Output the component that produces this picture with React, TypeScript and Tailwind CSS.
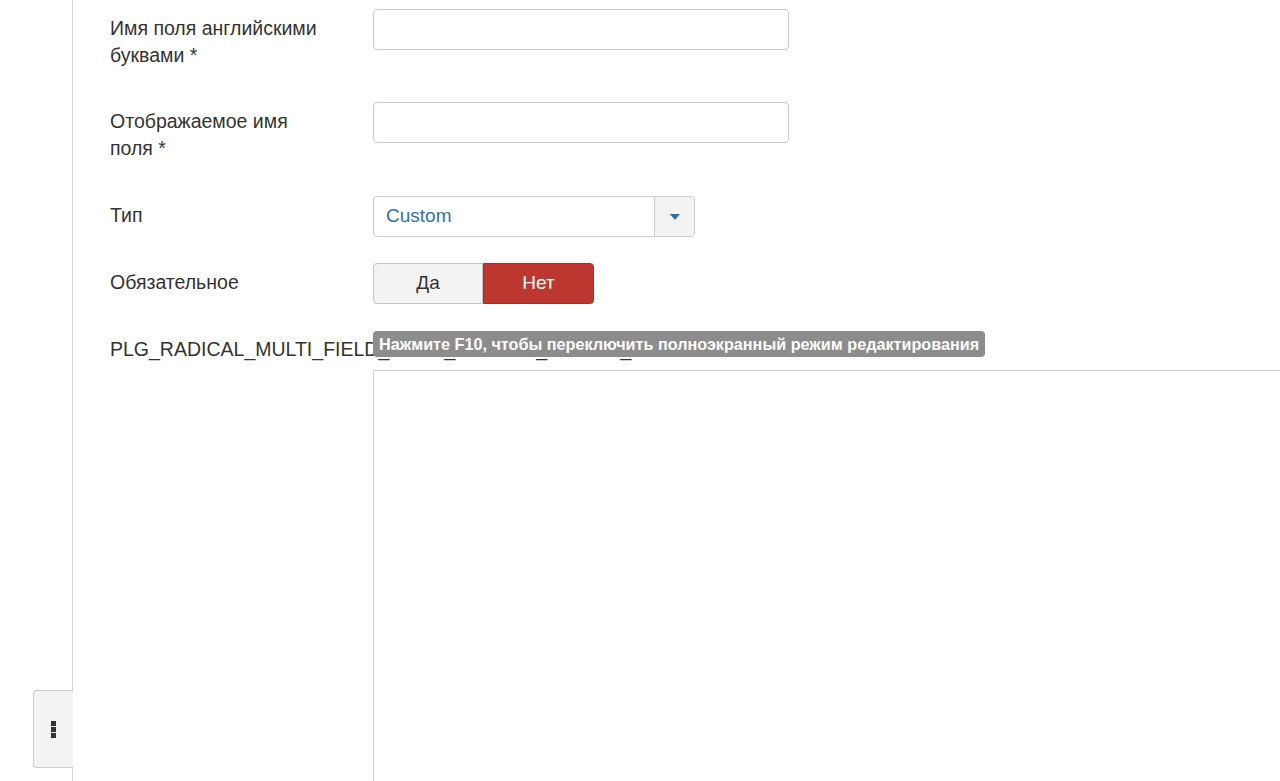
import React from 'react';

const font = { fontFamily: '"Liberation Sans", Arial, Helvetica, sans-serif' };

const Row: React.FC<{ label: React.ReactNode; className?: string; children: React.ReactNode }> = ({ label, className = '', children }) => (
  <div className={`flex ${className}`}>
    <div className="w-[263px] shrink-0 pt-[6px] pr-[30px] text-[19.5px] leading-[27px] text-[#333]">{label}</div>
    <div className="flex-1">{children}</div>
  </div>
);

const TextInput = () => (
  <div className="h-[41px] w-[416px] rounded-[4px] border border-[#cccccc] bg-white" />
);

const App: React.FC = () => {
  return (
    <div className="relative h-[781px] w-[1280px] overflow-hidden bg-white" style={font}>
      <div className="ml-[72px] h-full border-l border-[#d4d4d4] pl-[37px] pt-[9px]">
        <Row label={<>Имя поля английскими<br />буквами *</>}>
          <TextInput />
        </Row>

        <Row className="mt-[33px]" label={<>Отображаемое имя<br />поля *</>}>
          <TextInput />
        </Row>

        <Row className="mt-[34px]" label="Тип">
          <div className="flex h-[41px] w-[322px] overflow-hidden rounded-[4px] border border-[#cccccc] bg-white">
            <div className="flex flex-1 items-center px-[12px] text-[19px] text-[#2f6fab]">Custom</div>
            <div className="flex w-[40px] items-center justify-center border-l border-[#cccccc] bg-[#f3f3f3]">
              <svg width="10" height="6" viewBox="0 0 10 6">
                <path d="M0 0h10L5 6z" fill="#2f6fab" />
              </svg>
            </div>
          </div>
        </Row>

        <Row className="mt-[26px]" label="Обязательное">
          <div className="flex h-[41px] w-[221px] text-[19px]">
            <div className="flex w-[110px] items-center justify-center rounded-l-[4px] border border-[#c4c4c4] bg-[#f3f3f3] text-[#333]">Да</div>
            <div className="flex flex-1 items-center justify-center rounded-r-[4px] border border-[#a8302a] bg-[#bd362f] text-white">Нет</div>
          </div>
        </Row>

        <div className="relative mt-[27px] flex">
          <div className="w-[263px] shrink-0 whitespace-nowrap pt-[5px] text-[19.5px] leading-[27px] text-[#333]">
            PLG_RADICAL_MULTI_FIELD_FIELD_PARAMS_EDITOR_LABEL
          </div>
          <div className="relative flex-1">
            <div className="absolute left-0 top-0 z-10 whitespace-nowrap rounded-[4px] bg-[#8c8c8c] px-[6px] text-[16.2px] font-bold leading-[26px] text-white">
              Нажмите F10, чтобы переключить полноэкранный режим редактирования
            </div>
            <div className="mt-[39px] h-[500px] w-[960px] border-l border-t border-[#cfcfcf] bg-white" />
          </div>
        </div>
      </div>

      <button className="absolute left-[33px] top-[690px] flex h-[78px] w-[40px] items-center justify-center rounded-l-[4px] border border-r-0 border-[#cccccc] bg-[#f3f3f3]">
        <div className="flex flex-col gap-[1px]">
          <span className="block h-[5px] w-[5px] bg-[#333]" />
          <span className="block h-[5px] w-[5px] bg-[#333]" />
          <span className="block h-[5px] w-[5px] bg-[#333]" />
        </div>
      </button>
    </div>
  );
};

export default App;
